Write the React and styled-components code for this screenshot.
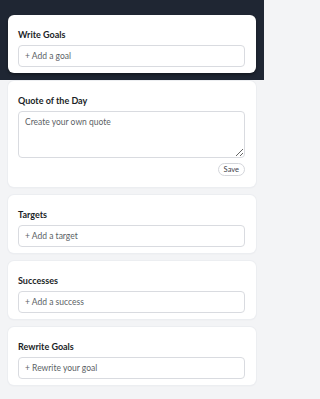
import React from "react";
import styled, { createGlobalStyle } from "styled-components";

const GlobalStyle = createGlobalStyle`
	html, body {
		margin: 0;
		padding: 0;
		background: #f3f4f6;
		font-family: Lato, "Open Sans", sans-serif;
		overflow: hidden;
	}
	* {
		box-sizing: border-box;
	}
`;

const Page = styled.div`
	width: 264px;
	min-height: 399px;
	background: #f3f4f6;
`;

const Header = styled.div`
	background: #1f2633;
	padding: 15px 8px 7px;
`;

const Main = styled.div`
	display: flex;
	flex-direction: column;
	gap: 8px;
	padding: 1px 8px 16px;
`;

const Card = styled.div`
	background: #fff;
	border-radius: 6px;
	padding: 13px 11px ${(p) => (p.$loose ? "11px" : "6px")} 10px;
	box-shadow: ${(p) =>
		p.$top ? "0 2px 3px rgba(0, 0, 0, 0.35)" : "0 0 0 1px #eceef1, 0 1px 2px rgba(0, 0, 0, 0.05)"};
`;

const Title = styled.div`
	font-size: 9px;
	font-weight: 700;
	line-height: 14px;
	color: #1a1e26;
	margin-bottom: 3px;
`;

const Input = styled.input`
	display: block;
	width: 100%;
	height: 22px;
	border: 1px solid #d9dbe0;
	border-radius: 4px;
	padding: 0 6px;
	font-family: inherit;
	font-size: 8.5px;
	color: #333;
	background: #fff;
	outline: none;
	&::placeholder {
		color: #5b5f66;
	}
`;

const Quote = styled.textarea`
	display: block;
	width: 100%;
	height: 47px;
	border: 1px solid #d9dbe0;
	border-radius: 4px;
	padding: 5px 6px;
	font-family: inherit;
	font-size: 8.5px;
	color: #333;
	resize: vertical;
	outline: none;
	&::placeholder {
		color: #5b5f66;
	}
`;

const Actions = styled.div`
	display: flex;
	justify-content: flex-end;
	margin-top: 5px;
`;

const SaveButton = styled.button`
	height: 13px;
	padding: 0 5px;
	border: 1px solid #d4d6db;
	border-radius: 7px;
	background: #fff;
	font-family: inherit;
	font-size: 7.5px;
	line-height: 11px;
	color: #3c4048;
	cursor: pointer;
`;

const sections = [
	{ title: "Targets", placeholder: "+ Add a target" },
	{ title: "Successes", placeholder: "+ Add a success" },
	{ title: "Rewrite Goals", placeholder: "+ Rewrite your goal" },
];

const App = () => {
	return (
		<Page>
			<GlobalStyle />
			<Header>
				<Card $top>
					<Title>Write Goals</Title>
					<Input placeholder="+ Add a goal" />
				</Card>
			</Header>
			<Main>
				<Card $loose>
					<Title>Quote of the Day</Title>
					<Quote placeholder="Create your own quote" />
					<Actions>
						<SaveButton>Save</SaveButton>
					</Actions>
				</Card>
				{sections.map((s) => (
					<Card key={s.title}>
						<Title>{s.title}</Title>
						<Input placeholder={s.placeholder} />
					</Card>
				))}
			</Main>
		</Page>
	);
};

export default App;
